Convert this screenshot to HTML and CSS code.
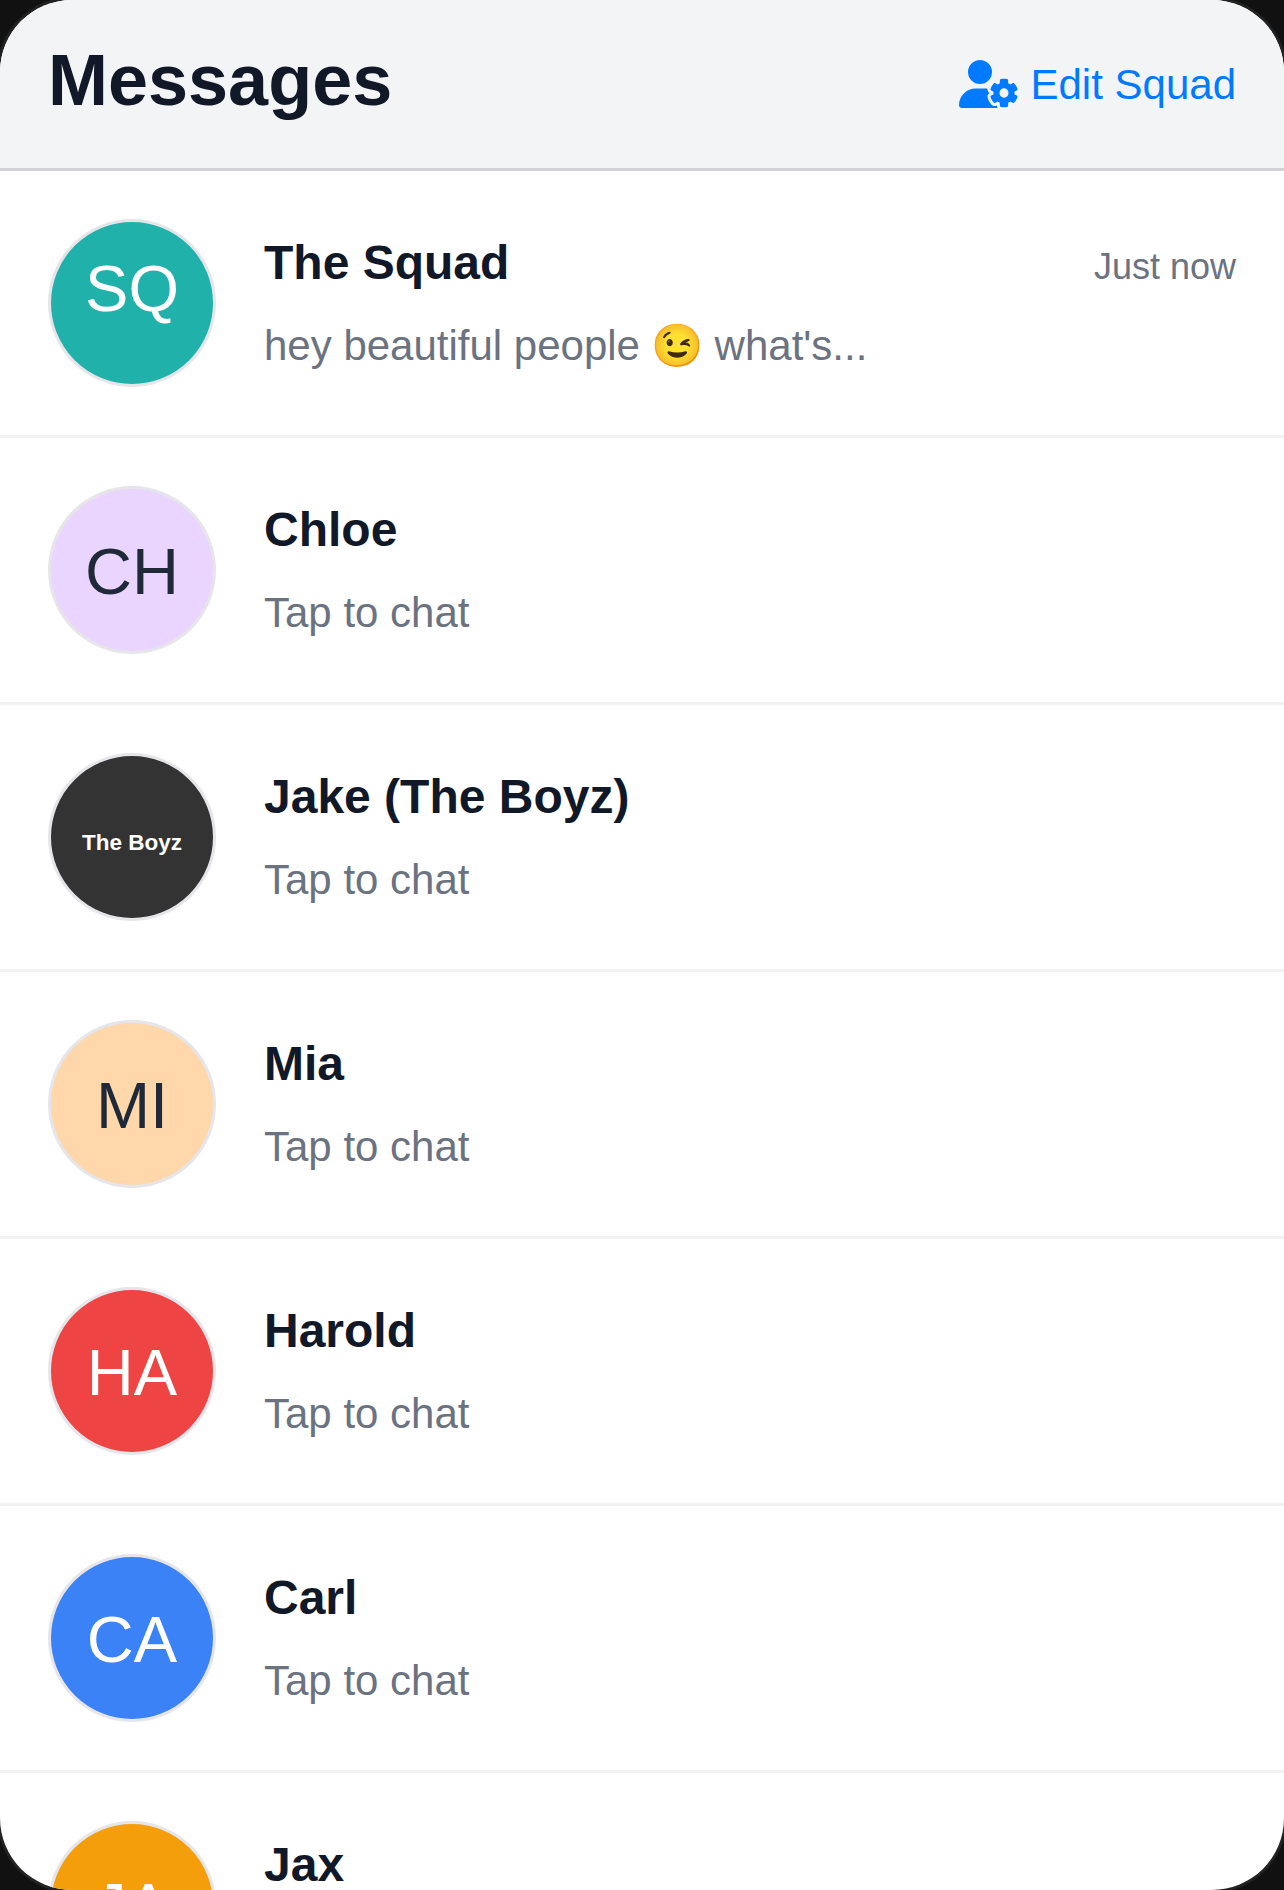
FILE: index.html
```html
<!DOCTYPE html>
<html lang="en">
<head>
  <meta charset="UTF-8">
  <title>Messages</title>
  <link rel="stylesheet" href="styles.css">
</head>
<body>
  <div class="screen">
    <header class="header">
      <h1>Messages</h1>
      <a class="edit-link" href="#">
        <svg class="edit-icon" viewBox="0 0 640 512" fill="currentColor"><path d="M224 0a128 128 0 1 1 0 256A128 128 0 1 1 224 0zM178.3 304h91.4c11.8 0 23.4 1.2 34.5 3.3c-2.1 18.5 7.4 35.6 21.8 44.8c-16.6 10.6-26.7 31.6-20 53.3c4 12.9 9.4 25.5 16.4 37.6s15.2 23.1 24.4 33c15.7 16.9 39.6 18.4 57.2 8.7v.9c0 9.2 2.7 18.5 7.9 26.3H29.7C13.3 512 0 498.7 0 482.3C0 383.8 79.8 304 178.3 304zM436 218.2c0-7 4.5-13.3 11.3-14.8c10.5-2.4 21.5-3.7 32.7-3.7s22.2 1.3 32.7 3.7c6.8 1.5 11.3 7.8 11.3 14.8v30.6c7.9 3.4 15.4 7.7 22.3 12.8l24.9-14.3c6.1-3.5 13.7-2.7 18.5 2.4c7.6 8.1 14.3 17.2 20.1 27.2s10.3 20.4 13.5 31c2.1 6.7-1.1 13.7-7.2 17.2l-25 14.4c.4 4 .7 8.1 .7 12.3s-.2 8.2-.7 12.3l25 14.4c6.1 3.5 9.2 10.5 7.2 17.2c-3.3 10.6-7.8 21-13.5 31s-12.5 19.1-20.1 27.2c-4.8 5.1-12.5 5.9-18.5 2.4l-24.9-14.3c-6.9 5.1-14.3 9.4-22.3 12.8l0 30.6c0 7-4.5 13.3-11.3 14.8c-10.5 2.4-21.5 3.7-32.7 3.7s-22.2-1.3-32.7-3.7c-6.8-1.5-11.3-7.8-11.3-14.8V454.8c-8-3.4-15.6-7.7-22.5-12.9l-24.7 14.3c-6.1 3.5-13.7 2.7-18.5-2.4c-7.6-8.1-14.3-17.2-20.1-27.2s-10.3-20.4-13.5-31c-2.1-6.7 1.1-13.7 7.2-17.2l24.8-14.3c-.4-4.1-.7-8.2-.7-12.4s.2-8.3 .7-12.4l-24.8-14.3c-6.1-3.5-9.2-10.5-7.2-17.2c3.3-10.6 7.7-21 13.5-31s12.5-19.1 20.1-27.2c4.8-5.1 12.4-5.9 18.5-2.4l24.8 14.3c6.9-5.1 14.5-9.4 22.5-12.9V218.2zm92.1 133.5a48.1 48.1 0 1 0 -96.1 0 48.1 48.1 0 1 0 96.1 0z"/></svg>
        <span class="edit-label">Edit Squad</span>
      </a>
    </header>

    <div class="chat-row">
      <div class="avatar avatar-squad">SQ</div>
      <div class="chat-body">
        <div class="chat-top">
          <span class="chat-name">The Squad</span>
          <span class="chat-time">Just now</span>
        </div>
        <p class="chat-preview">hey beautiful people <span class="chat-emoji">😉</span> what's...</p>
      </div>
    </div>

    <div class="chat-row">
      <div class="avatar avatar-chloe">CH</div>
      <div class="chat-body">
        <div class="chat-top"><span class="chat-name">Chloe</span></div>
        <p class="chat-preview">Tap to chat</p>
      </div>
    </div>

    <div class="chat-row">
      <div class="avatar avatar-boyz">The Boyz</div>
      <div class="chat-body">
        <div class="chat-top"><span class="chat-name">Jake (The Boyz)</span></div>
        <p class="chat-preview">Tap to chat</p>
      </div>
    </div>

    <div class="chat-row">
      <div class="avatar avatar-mia">MI</div>
      <div class="chat-body">
        <div class="chat-top"><span class="chat-name">Mia</span></div>
        <p class="chat-preview">Tap to chat</p>
      </div>
    </div>

    <div class="chat-row">
      <div class="avatar avatar-harold">HA</div>
      <div class="chat-body">
        <div class="chat-top"><span class="chat-name">Harold</span></div>
        <p class="chat-preview">Tap to chat</p>
      </div>
    </div>

    <div class="chat-row">
      <div class="avatar avatar-carl">CA</div>
      <div class="chat-body">
        <div class="chat-top"><span class="chat-name">Carl</span></div>
        <p class="chat-preview">Tap to chat</p>
      </div>
    </div>

    <div class="chat-row">
      <div class="avatar avatar-jax">JA</div>
      <div class="chat-body">
        <div class="chat-top"><span class="chat-name">Jax</span></div>
        <p class="chat-preview">Tap to chat</p>
      </div>
    </div>
  </div>
</body>
</html>
```

FILE: styles.css
```css
html, body {
  margin: 0;
  height: 100%;
  overflow: hidden;
  background-color: #111;
}
.screen {
  height: 1890px;
  background-color: #fff;
  border-radius: 72px;
  overflow: hidden;
  box-shadow: 0 0 0 3px #222;
  font-family: "Liberation Sans", Arial, "Noto Color Emoji", sans-serif;
}
.header {
  display: flex;
  justify-content: space-between;
  align-items: center;
  height: 168px;
  padding: 0 48px;
  background-color: #f3f4f6;
  border-bottom: 3px solid #d1d1d6;
}
.header h1 {
  margin: 0 0 8px;
  font-size: 72px;
  font-weight: 700;
  color: #111827;
}
.edit-link {
  display: flex;
  align-items: center;
  gap: 12px;
  font-size: 42px;
  color: #007aff;
  text-decoration: none;
}
.edit-label {
  margin-top: 2px;
}
.edit-icon {
  width: 60px;
  height: 48px;
}
.chat-row {
  display: flex;
  align-items: flex-start;
  gap: 48px;
  padding: 48px;
  border-bottom: 3px solid #f2f2f2;
}
.avatar {
  flex: none;
  box-sizing: border-box;
  display: flex;
  align-items: center;
  justify-content: center;
  width: 168px;
  height: 168px;
  padding-top: 3px;
  border: 3px solid #e5e5ea;
  border-radius: 50%;
  font-size: 65px;
}
.avatar-squad { background-color: #20b2aa; color: #fff; padding-top: 0; padding-bottom: 29px; }
.avatar-chloe { background-color: #e9d5ff; color: #1f2937; }
.avatar-boyz { background-color: #333; color: #fff; font-size: 22.5px; font-weight: 700; padding-top: 12px; }
.avatar-mia { background-color: #fed7aa; color: #1f2937; }
.avatar-harold { background-color: #ef4444; color: #fff; }
.avatar-carl { background-color: #3b82f6; color: #fff; }
.avatar-jax { background-color: #f59e0b; color: #fff; }
.chat-body {
  flex: 1;
  min-width: 0;
  padding-top: 16px;
}
.chat-top {
  display: flex;
  justify-content: space-between;
  align-items: baseline;
  margin-bottom: 32px;
}
.chat-name {
  font-size: 48px;
  font-weight: 700;
  color: #111827;
}
.chat-time {
  font-size: 36px;
  color: #6b7280;
}
.chat-preview {
  margin: 0;
  font-size: 42px;
  line-height: 48px;
  color: #6b7280;
}
.chat-emoji {
  margin-right: -1px;
}
```
